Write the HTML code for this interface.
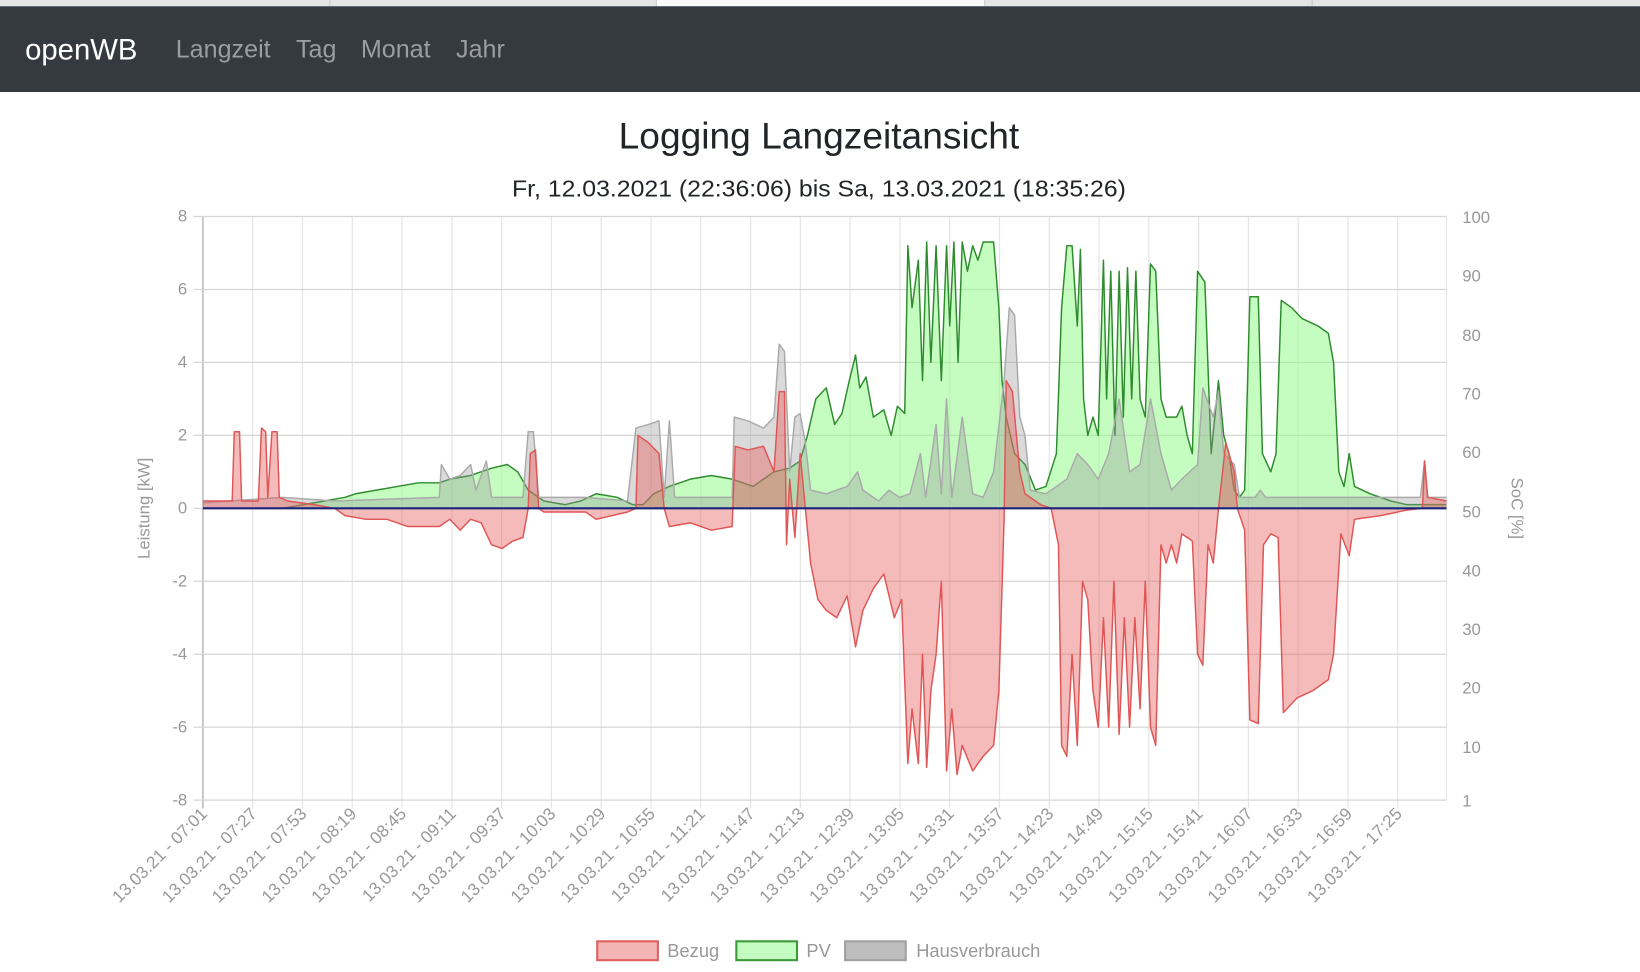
<!DOCTYPE html>
<html><head><meta charset="utf-8">
<style>
html,body{margin:0;padding:0;background:#fff;overflow:hidden;width:1640px;height:971px}
#w{position:absolute;left:0;top:0;width:1568px;height:929px;transform:scale(1.04592);transform-origin:0 0;font-family:"Liberation Sans",sans-serif}
.tabs{position:absolute;left:0;top:0;width:1568px;height:6px;background:#e4e4e4}
.tabs div{position:absolute;top:0;height:6px;border-left:1px solid #c8c8c8}
.nav{position:absolute;left:0;top:6px;width:1568px;height:82px;background:#343a40}
.nav span{position:absolute;top:0;line-height:84px;color:#9a9da1;font-size:24px}
</style></head><body>
<div id="w">
<div class="tabs"><div style="left:315px"></div><div style="left:627px;width:314px;background:#fafafa"></div><div style="left:941px"></div><div style="left:1254px"></div></div>
<div class="nav">
<span style="left:24px;color:#fff;font-size:28px">openWB</span>
<span style="left:168px">Langzeit</span>
<span style="left:283px">Tag</span>
<span style="left:345px">Monat</span>
<span style="left:436px">Jahr</span>
</div>
<svg id="c" width="1568" height="929" style="position:absolute;left:0;top:0" font-family="Liberation Sans, sans-serif">
<text x="783" y="142" text-anchor="middle" font-size="35" fill="#212529" font-weight="500" textLength="383" lengthAdjust="spacingAndGlyphs">Logging Langzeitansicht</text>
<text x="783" y="188" text-anchor="middle" font-size="22" fill="#212529" textLength="587" lengthAdjust="spacingAndGlyphs">Fr, 12.03.2021 (22:36:06) bis Sa, 13.03.2021 (18:35:26)</text>
<g id="grid"></g>
<g id="data"></g>
<line x1="194" y1="486" x2="1383" y2="486" stroke="#1a237e" stroke-width="2"/>
<text transform="translate(143,486) rotate(-90)" text-anchor="middle" font-size="16" fill="#999">Leistung [kW]</text>
<text transform="translate(1445,486) rotate(90)" text-anchor="middle" font-size="16" fill="#999">SoC [%]</text>
<g font-size="17.5" fill="#999">
<rect x="571" y="900" width="58" height="18" fill="#f3b4b4" stroke="#e06060" stroke-width="2"/>
<text x="638" y="915">Bezug</text>
<rect x="704" y="900" width="58" height="18" fill="#c4fbc0" stroke="#3a9a3a" stroke-width="2"/>
<text x="771" y="915">PV</text>
<rect x="808" y="900" width="58" height="18" fill="#bdbdbd" stroke="#a0a0a0" stroke-width="2"/>
<text x="876" y="915">Hausverbrauch</text>
</g>
</svg>
</div>
<script>
var NS="http://www.w3.org/2000/svg";
function el(p,t,a,txt){var e=document.createElementNS(NS,t);for(var k in a)e.setAttribute(k,a[k]);if(txt!=null)e.textContent=txt;p.appendChild(e);return e;}
var g=document.getElementById('grid'),d=document.getElementById('data');
var L=194,R=1383,T=207,B=765,Z=486;
function Y(v){return Z-v*34.875;}
var times=["07:01","07:27","07:53","08:19","08:45","09:11","09:37","10:03","10:29","10:55","11:21","11:47","12:13","12:39","13:05","13:31","13:57","14:23","14:49","15:15","15:41","16:07","16:33","16:59","17:25"];
for(var i=0;i<25;i++){var x=194+i*47.6;
 el(g,'line',{x1:x,y1:T,x2:x,y2:B+8,stroke:i==0?'#bbb':'#e6e6e6','stroke-width':i==0?1.5:1.2});
 el(g,'text',{transform:'translate('+(x+5)+','+(B+14)+') rotate(-45)','text-anchor':'end','font-size':16.5,fill:'#999'},'13.03.21 - '+times[i]);}
el(g,'line',{x1:R,y1:T,x2:R,y2:B,stroke:'#e6e6e6'});
for(var v=8;v>=-8;v-=2){var y=Y(v);
 el(g,'line',{x1:185,y1:y,x2:R,y2:y,stroke:'#d6d6d6','stroke-width':1.2});
 el(g,'text',{x:179,y:y+5,'text-anchor':'end','font-size':16,fill:'#999'},String(v));}
var soc=[[100,207],[90,263],[80,320],[70,376],[60,432],[50,489],[40,545],[30,601],[20,657],[10,714],[1,765]];
soc.forEach(function(s){el(g,'text',{x:1398,y:s[1]+6,'font-size':16,fill:'#999'},String(s[0]));});
function series(pts,fill,stroke){
 var s='M'+pts[0][0]+','+Z;pts.forEach(function(p){s+=' L'+p[0]+','+Y(p[1]).toFixed(1);});s+=' L'+pts[pts.length-1][0]+','+Z+' Z';
 el(d,'path',{d:s,fill:fill,stroke:'none'});
 var l='M'+pts.map(function(p){return p[0]+','+Y(p[1]).toFixed(1)}).join(' L');
 el(d,'path',{d:l,fill:'none',stroke:stroke,'stroke-width':1.4,'stroke-linejoin':'round'});}
var pv=[[194,0],[270,0],[300,0.15],[330,0.3],[340,0.4],[380,0.6],[400,0.7],[420,0.7],[430,0.8],[450,0.9],[470,1.1],[485,1.2],[495,1.0],[505,0.5],[520,0.2],[540,0.1],[555,0.2],[570,0.4],[590,0.3],[605,0.1],[615,0.1],[625,0.4],[640,0.6],[660,0.8],[680,0.9],[700,0.8],[720,0.6],[740,1.0],[755,1.1],[765,1.3],[772,2],[780,3],[790,3.3],[798,2.3],[805,2.6],[812,3.5],[818,4.2],[822,3.3],[828,3.6],[835,2.5],[845,2.7],[852,2],[858,2.8],[865,2.6],[868,7.2],[872,5.5],[878,6.8],[882,3.5],[886,7.3],[890,4],[895,7.2],[900,3.5],[905,7.2],[908,5],[912,7.3],[916,4],[920,7.3],[925,6.5],[930,7.2],[935,6.8],[940,7.3],[950,7.3],[955,5.5],[958,3.5],[962,2.5],[970,1.5],[980,1.2],[990,0.5],[1000,0.6],[1010,1.5],[1015,5.5],[1020,7.2],[1025,7.2],[1030,5],[1033,7.1],[1036,3],[1040,2],[1045,2.5],[1050,2],[1055,6.8],[1058,3],[1062,6.5],[1066,2],[1070,6.5],[1074,2.5],[1078,6.6],[1082,3],[1086,6.5],[1090,3],[1095,2.5],[1100,6.7],[1105,6.5],[1110,3],[1115,2.5],[1125,2.5],[1130,2.8],[1135,2.0],[1140,1.5],[1145,6.5],[1152,6.2],[1158,1.5],[1165,3.5],[1170,2],[1175,1.5],[1180,0.5],[1185,0.3],[1190,0.5],[1195,5.8],[1203,5.8],[1207,1.5],[1215,1.0],[1220,1.5],[1225,5.7],[1235,5.5],[1245,5.2],[1260,5.0],[1270,4.8],[1275,4],[1280,1.0],[1285,0.6],[1290,1.5],[1295,0.6],[1310,0.4],[1330,0.2],[1345,0.1],[1383,0.1]];
var bz=[[194,0.2],[222,0.2],[224,2.1],[229,2.1],[231,0.2],[247,0.2],[250,2.2],[254,2.1],[256,0.3],[260,2.1],[265,2.1],[267,0.3],[275,0.2],[300,0.1],[320,0],[330,-0.2],[350,-0.3],[370,-0.3],[390,-0.5],[420,-0.5],[430,-0.3],[440,-0.6],[450,-0.3],[460,-0.4],[470,-1.0],[480,-1.1],[490,-0.9],[500,-0.8],[505,0],[507,1.5],[512,1.6],[515,0],[520,-0.1],[560,-0.1],[570,-0.3],[600,-0.1],[608,0],[610,2.0],[620,1.8],[630,1.5],[635,0],[640,-0.5],[660,-0.4],[680,-0.6],[700,-0.5],[703,1.7],[715,1.6],[730,1.7],[740,1.0],[745,3.2],[750,3.2],[752,-1],[755,0.8],[760,-0.8],[765,1.5],[770,0],[775,-1.5],[782,-2.5],[790,-2.8],[800,-3.0],[810,-2.4],[818,-3.8],[825,-2.8],[835,-2.2],[845,-1.8],[855,-3.0],[862,-2.5],[868,-7.0],[872,-5.5],[878,-7.0],[882,-4],[886,-7.1],[890,-5],[895,-4],[900,-2],[905,-7.2],[910,-5.5],[915,-7.3],[920,-6.5],[930,-7.2],[940,-6.8],[950,-6.5],[955,-5.0],[960,-0.3],[962,3.5],[968,3.2],[975,1.0],[980,0.4],[995,0.1],[1005,0],[1012,-1],[1015,-6.5],[1020,-6.8],[1025,-4],[1030,-6.5],[1035,-2],[1040,-2.5],[1045,-5.0],[1050,-6],[1055,-3],[1060,-6.0],[1065,-2],[1070,-6.2],[1075,-3],[1080,-6.0],[1085,-3],[1090,-5.5],[1095,-2],[1100,-6.0],[1105,-6.5],[1110,-1.0],[1115,-1.5],[1120,-1.0],[1125,-1.5],[1130,-0.7],[1140,-0.9],[1145,-4.0],[1150,-4.3],[1155,-1],[1160,-1.5],[1165,0],[1172,1.8],[1180,1.0],[1183,0],[1190,-0.6],[1195,-5.8],[1203,-5.9],[1208,-1],[1215,-0.7],[1222,-0.8],[1227,-5.6],[1240,-5.2],[1255,-5.0],[1270,-4.7],[1275,-4.0],[1282,-0.7],[1290,-1.3],[1295,-0.3],[1320,-0.2],[1345,-0.05],[1360,0],[1362,1.3],[1365,0.3],[1383,0.2]];
var hv=[[194,0.15],[270,0.3],[320,0.2],[420,0.3],[422,1.2],[430,0.8],[440,0.9],[450,1.2],[455,0.5],[465,1.3],[470,0.3],[500,0.3],[505,2.1],[510,2.1],[515,0.3],[560,0.3],[600,0.2],[608,2.2],[620,2.3],[630,2.4],[635,0.3],[640,2.4],[645,0.3],[700,0.3],[702,2.5],[715,2.4],[730,2.2],[740,2.5],[745,4.5],[750,4.3],[755,1],[760,2.5],[765,2.6],[770,1.8],[775,0.5],[790,0.4],[800,0.5],[810,0.6],[820,1],[825,0.5],[840,0.2],[850,0.5],[860,0.3],[870,0.4],[880,1.5],[885,0.3],[895,2.3],[900,0.4],[905,3.0],[910,0.3],[920,2.5],[930,0.4],[940,0.3],[950,1],[960,3.5],[965,5.5],[970,5.3],[975,2.5],[980,2],[985,0.5],[1000,0.4],[1010,0.6],[1020,0.8],[1030,1.5],[1040,1.2],[1050,0.8],[1060,1.5],[1070,3],[1080,1.0],[1090,1.2],[1100,3],[1110,1.5],[1120,0.5],[1130,0.8],[1145,1.2],[1150,3.3],[1160,2.5],[1165,3.2],[1170,1.5],[1180,1.2],[1185,0.3],[1200,0.3],[1205,0.5],[1210,0.3],[1358,0.3],[1362,1.3],[1365,0.3],[1383,0.3]];
series(pv,'rgba(150,250,140,0.55)','#2e8b2e');
series(hv,'rgba(150,150,150,0.35)','#aaaaaa');
series(bz,'rgba(230,90,90,0.42)','#e05555');
</script>
</body></html>
